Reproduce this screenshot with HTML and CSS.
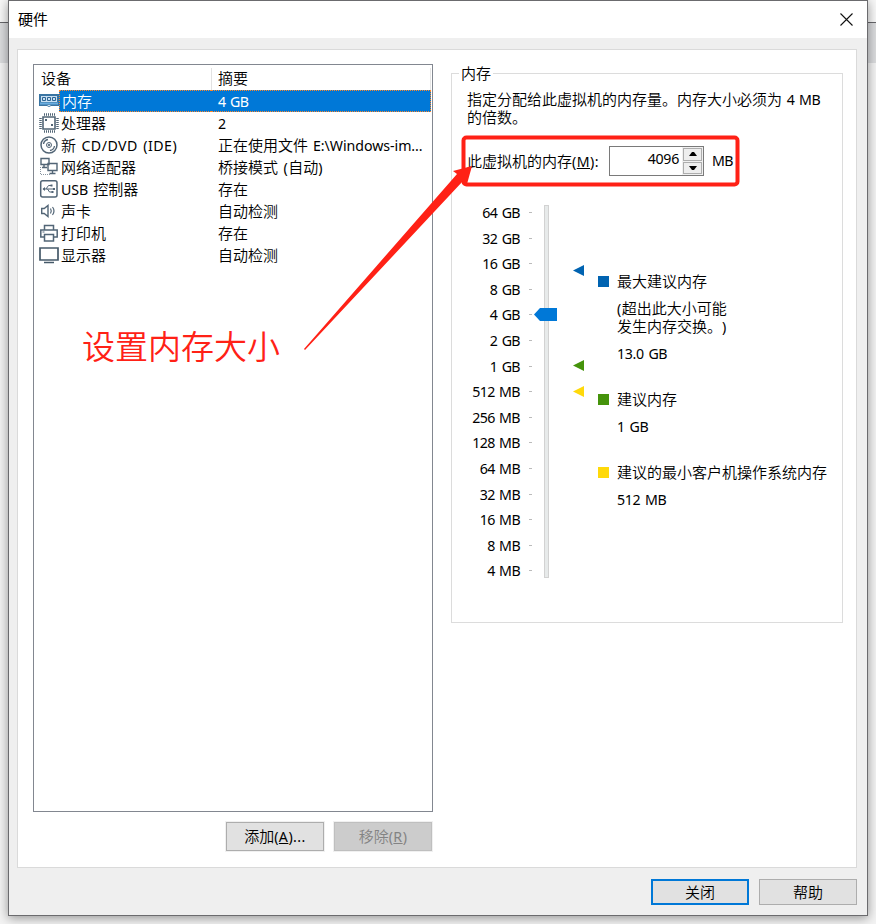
FILE: index.html
```html
<!DOCTYPE html>
<html lang="zh-CN">
<head>
<meta charset="utf-8">
<title>硬件</title>
<link rel="stylesheet" href="styles.css">
</head>
<body>
<div class="window">
  <header class="titlebar">
    <h1>硬件</h1>
    <svg class="close" width="13" height="13" viewBox="0 0 13 13"><path d="M.5 .5l12 12M12.5 .5l-12 12" fill="none" stroke="#111" stroke-width="1.1"/></svg>
  </header>
  <main class="panel">
    <section class="devices">
      <div class="list">
        <div class="row head"><span class="name">设备</span><span class="summary">摘要</span></div>
        <div class="row selected">
          <svg class="icon" width="20" height="20" viewBox="0 0 20 20"><path d="M0 3h20v11H0z" fill="#3a75a3"/><path d="M2 5h16v6H2z" fill="#c9e0f2"/><path d="M3.500 6.500h3v3h-3zM8.500 6.500h3v3h-3zM13.500 6.500h3v3h-3z" fill="#c9e0f2" stroke="#2d6594"/><path d="M1 12.500h18" stroke="#6aaee0" stroke-width="2"/><path d="M.5 4v11M19.500 4v11M0 14.500h8l2 1 2-1h8" fill="none" stroke="#3a75a3"/></svg>
          <span class="name">内存</span><span class="summary"><i>4 GB</i></span></div>
        <div class="row">
          <svg class="icon" width="20" height="20" viewBox="0 0 20 20" fill="none" stroke="#526576"><path d="M4 4h12v12H4z" stroke-width="1.6"/><path d="M5 1.500h11M5 18.500h11" stroke-width="2.500" stroke-dasharray="1 1"/><path d="M1.500 5v11M18.500 5v11" stroke-width="2.500" stroke-dasharray="1 1"/><path d="M6 6h2v2H6zM12 11h2v2h-2z" fill="#526576" stroke="none"/></svg>
          <span class="name">处理器</span><span class="summary"><i>2</i></span></div>
        <div class="row">
          <svg class="icon" width="20" height="20" viewBox="0 0 20 20" fill="none" stroke="#526576"><circle cx="10" cy="10" r="8" stroke-width="1.5"/><circle cx="10" cy="10" r="2.500"/><circle cx="10" cy="10" r=".8" fill="#526576"/><path d="M4.500 9a5.500 5.500 0 0 1 4.500-4.500M11 15.500a5.500 5.500 0 0 0 4.500-4.500" stroke-width="1.3"/></svg>
          <span class="name">新<i class="wide"> CD/DVD (IDE)</i></span><span class="summary">正在使用文件<i class="path"> E:\Windows-im...</i></span></div>
        <div class="row">
          <svg class="icon" width="20" height="20" viewBox="0 0 20 20" fill="none" stroke="#526576" stroke-width="1.400"><path d="M2 1.500h8v6H2zM9 6.500h9v7H9z" fill="#fff"/><path d="M5 8v2.500M3 10.500h5M13.500 14v2M10.500 16.500h6"/><path d="M1.500 10v8M2 17.500h10" stroke="#8794a0" stroke-width="1" stroke-dasharray="1 1"/></svg>
          <span class="name">网络适配器</span><span class="summary">桥接模式<i class="wide"> (</i>自动<i class="wide">)</i></span></div>
        <div class="row">
          <svg class="icon" width="20" height="20" viewBox="0 0 20 20" fill="none" stroke="#526576"><rect x="1.700" y="1.700" width="16.300" height="16.300" rx="2" stroke-width="1.500"/><path d="M4 10h12M7 10l2.500-3.500H12M8.500 10l2 3H13"/><path d="M3.500 10l2.500-2v4zM11.500 5.500h2v2h-2zM12.500 12h2v2h-2zM14 9h2v2h-2z" fill="#526576" stroke="none"/></svg>
          <span class="name"><i class="path">USB </i>控制器</span><span class="summary">存在</span></div>
        <div class="row">
          <svg class="icon" width="20" height="20" viewBox="0 0 20 20" fill="none" stroke="#526576"><path d="M2.700 7.500h2.500L9 4.500v11l-3.800-3H2.700z" stroke-width="1.400"/><path d="M11.500 7.500q1.500 2.500 0 5M13.500 6q3 4 0 8" stroke-width="1.200"/></svg>
          <span class="name">声卡</span><span class="summary">自动检测</span></div>
        <div class="row">
          <svg class="icon" width="20" height="20" viewBox="0 0 20 20" fill="none" stroke="#526576" stroke-width="1.500"><path d="M5.500 7V2.500h9V7M5 14H1.800V7h16.400v7H15"/><path d="M5.500 11.500h9V18h-9z"/><path d="M3.500 9h2" stroke-width="1"/></svg>
          <span class="name">打印机</span><span class="summary">存在</span></div>
        <div class="row">
          <svg class="icon" width="20" height="20" viewBox="0 0 20 20"><path d="M1 3h18v12H1z" fill="none" stroke="#455969" stroke-width="1.700"/><path d="M5 17.500h10" stroke="#455969" stroke-width="1.500"/></svg>
          <span class="name">显示器</span><span class="summary">自动检测</span></div>
      </div>
      <div class="actions">
        <button class="btn">添加<i class="wide">(<u>A</u>)...</i></button>
        <button class="btn" disabled>移除<i class="wide">(<u>R</u>)</i></button>
      </div>
    </section>
    <fieldset class="memory">
      <legend>内存</legend>
      <p class="desc">指定分配给此虚拟机的内存量。内存大小必须为<i class="mb"> 4 MB</i><br>的倍数。</p>
      <div class="amount">
        <label>此虚拟机的内存<i class="wide">(<u>M</u>):</i></label>
        <div class="spin"><i class="value">4096</i><div class="steps"><b><svg width="8" height="4" viewBox="0 0 8 4"><path d="M0 4l3-4h2l3 4z"/></svg></b><b><svg width="8" height="4" viewBox="0 0 8 4"><path d="M0 0l3 4h2l3-4z"/></svg></b></div></div>
        <i>MB</i>
      </div>
      <div class="scale">
        <div class="labels">
          <i>64 GB</i><i>32 GB</i><i>16 GB</i><i>8 GB</i><i>4 GB</i><i>2 GB</i><i>1 GB</i><i>512 MB</i><i>256 MB</i><i>128 MB</i><i>64 MB</i><i>32 MB</i><i>16 MB</i><i>8 MB</i><i>4 MB</i>
        </div>
        <div class="track"><svg class="thumb" width="23" height="13" viewBox="0 0 23 13"><path d="M0 6.500L6 0h17v13H6z" fill="#0078d7"/></svg></div>
        <svg class="marks" width="12" height="140" viewBox="0 0 12 140"><path d="M0 6.500l11-5.500v11z" fill="#0063b1"/><path d="M0 101.500l11-5.500v11z" fill="#45930b"/><path d="M0 127.500l11-5.500v11z" fill="#ffd90a"/></svg>
        <div class="legend">
          <div class="entry max"><p>最大建议内存</p><p class="note"><i class="wide">(</i>超出此大小可能<br>发生内存交换。<i class="wide">)</i></p><p><i class="mb">13.0 GB</i></p></div>
          <div class="entry rec"><p>建议内存</p><p><i class="mb">1 GB</i></p></div>
          <div class="entry min"><p>建议的最小客户机操作系统内存</p><p><i class="mb">512 MB</i></p></div>
        </div>
      </div>
    </fieldset>
  </main>
  <footer class="footer"><button class="btn primary">关闭</button><button class="btn">帮助</button></footer>
</div>
<svg class="annotation" width="876" height="924" viewBox="0 0 876 924"><rect x="463.500" y="137.500" width="274" height="47" rx="3" fill="none" stroke="#ff2116" stroke-width="4"/><path d="M304 349L457 174L453 171L472 166L467 184L463 181L305 350z" fill="#ff2116"/></svg>
<div class="callout">设置内存大小</div>
</body>
</html>
```
FILE: styles.css
```css
* { box-sizing: border-box; }
body {
  margin: 0;
  width: 876px;
  height: 924px;
  overflow: hidden;
  padding-left: 8px;
  background: linear-gradient(#f7f7f7 22px, #66666a 22px, #66666a 23px, #dadbdd 23px, #dadbdd 63px, #f3f3f3 63px);
  font: 350 15px/18px "Noto Sans CJK SC", sans-serif;
  text-spacing-trim: space-all;
  color: #000;
}
i {
  font: 400 14.2px/16px "Noto Sans", sans-serif;
  letter-spacing: -.6px;
  word-spacing: 1.3px;
  white-space: pre;
}
.wide { letter-spacing: .45px; }
.path { letter-spacing: -.05px; }
.mb { letter-spacing: -.35px; }
p, h1 { margin: 0; font-weight: inherit; }
.window {
  width: 860px;
  height: 916px;
  border: 1px solid #6b6b6e;
  background: #efefef;
  box-shadow: 0 2px 10px rgba(0, 0, 0, .4);
}
.titlebar {
  height: 37px;
  padding: 0 14px 2px 9px;
  display: flex;
  justify-content: space-between;
  align-items: center;
  background: #fff;
}
.close { margin-top: 1px; }
h1 { font-size: 15px; font-weight: 400; }
.panel {
  width: 840px;
  height: 819px;
  margin: 11px 0 0 8px;
  padding: 14px 13px 0 15px;
  border: 1px solid #dadada;
  display: flex;
  justify-content: space-between;
  align-items: flex-start;
  background: #fff;
}
.list {
  width: 400px;
  height: 748px;
  padding: 3px 1px 0 5px;
  border: 1px solid #828790;
}
.row { height: 22px; display: flex; line-height: 21px; }
.row i { line-height: 19px; }
.icon { flex: none; width: 20px; margin-top: 1px; }
.name { width: 152px; padding-left: 2px; white-space: nowrap; }
.summary { flex: 1; padding-left: 7px; white-space: nowrap; }
.head { line-height: 19px; }
.head .name { width: 173px; padding-left: 2px; border-right: 1px solid #e2e2e2; }
.head .summary { padding-left: 6px; border-right: 1px solid #e5e5e5; }
.selected .name, .selected .summary { background: #0078d7; color: #fff; border: 1px dotted #ff8728; line-height: 19px; }
.selected .name { border-right: 0; }
.selected .summary { border-left: 0; }
.actions { display: flex; justify-content: flex-end; gap: 10px; margin: 10px 1px 0 0; }
.btn {
  width: 98px;
  height: 29px;
  padding: 0 0 1px;
  border: 1px solid #adadad;
  background: #e1e1e1;
  font: inherit;
  color: #000;
}
.actions .btn { box-shadow: 0 0 0 1px #f0f0f0; }
.btn:disabled { background: #ccc; border-color: #bfbfbf; color: #838383; }
.memory {
  width: 392px;
  height: 559px;
  margin: 0;
  padding: 8px 0 0 15px;
  border: 1px solid #dcdcdc;
  min-width: 0;
}
legend { height: 18px; margin-left: -8px; padding: 0 2px; }
.desc { height: 36px; white-space: nowrap; }
.amount { height: 30px; margin-top: 20px; display: flex; align-items: center; }
.amount label { width: 142px; white-space: nowrap; }
.spin {
  width: 95px;
  height: 30px;
  margin-right: 8px;
  border: 1px solid #7a7a7a;
  display: flex;
  justify-content: flex-end;
}
.value { padding: 4px 3px 0 0; letter-spacing: -.3px; }
.steps { width: 21px; display: flex; flex-direction: column; background: #f0f0f0; padding: 1px; gap: 1px; }
.steps b { flex: 1; border: 1px solid #adadad; display: flex; align-items: center; justify-content: center; background: #eee; }
.scale { display: flex; margin-top: 27px; }
.labels { width: 65px; height: 384px; display: flex; flex-direction: column; }
.labels i { flex: 1; padding-right: 12px; text-align: right; line-height: 20px; background: linear-gradient(#bbb, #bbb) right 9px / 3px 1px no-repeat; }
.track { position: relative; width: 5px; height: 373px; margin: 2px 0 0 12px; border: 1px solid #d2d2d2; background: #e7eaea; }
.thumb { position: absolute; left: -11px; top: 102px; }
.marks { margin: 61px 13px 0 24px; }
.legend { padding-top: 69px; }
.entry { padding-left: 19px; background-repeat: no-repeat; background-size: 11px 11px; background-position: 0 4px; white-space: nowrap; }
.entry p + p { margin-top: 9px; }
.max { height: 118px; background-image: linear-gradient(#0063b1, #0063b1); }
.rec { height: 73px; background-image: linear-gradient(#45930b, #45930b); }
.min { background-image: linear-gradient(#ffd90a, #ffd90a); }
.footer { display: flex; justify-content: flex-end; gap: 10px; padding: 11px 10px 0 0; }
.footer .btn { height: 26px; }
.footer .primary { border: 2px solid #0078d7; }
.annotation { position: absolute; left: 0; top: 0; pointer-events: none; }
.callout { position: absolute; left: 82px; top: 324px; font-size: 33px; font-weight: 350; line-height: 42px; color: #ff2116; white-space: nowrap; }
```
